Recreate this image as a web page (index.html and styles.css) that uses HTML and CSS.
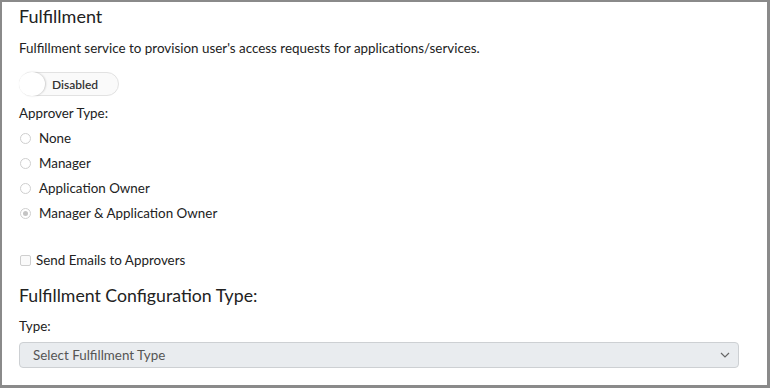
FILE: index.html
```html
<!DOCTYPE html>
<html lang="en">
<head>
    <meta charset="UTF-8">
    <meta name="viewport" content="width=device-width, initial-scale=1.0">
    <title>Fulfillment</title>
    <link rel="stylesheet" href="styles.css">
</head>
<body>
    <div class="panel">
        <h2>Fulfillment</h2>
        <p class="desc">Fulfillment service to provision user's access requests for applications/services.</p>

        <!-- toggle -->
        <div class="toggle">
            <span class="knob"></span>
            <span class="toggle-label">Disabled</span>
        </div>

        <label class="group-label">Approver Type:</label>
        <div class="radios">
            <label class="radio"><span class="dot"></span> None</label>
            <label class="radio"><span class="dot"></span> Manager</label>
            <label class="radio"><span class="dot"></span> Application Owner</label>
            <label class="radio"><span class="dot checked"></span> Manager &amp; Application Owner</label>
        </div>

        <label class="check"><span class="box"></span> Send Emails to Approvers</label>

        <h3>Fulfillment Configuration Type:</h3>
        <label class="type-label">Type:</label>
        <div class="select">
            <span>Select Fulfillment Type</span>
            <svg width="10" height="6" viewBox="0 0 10 6"><path d="M1 1 L5 5 L9 1" fill="none" stroke="#666" stroke-width="1.2"/></svg>
        </div>
    </div>
</body>
</html>
```

FILE: styles.css
```css
html, body {
    margin: 0;
    padding: 0;
}
body {
    font-family: Lato, "Open Sans", sans-serif;
    color: #222;
    background: #fff;
}
.panel {
    width: 770px;
    height: 388px;
    box-sizing: border-box;
    border-top: 2px solid #8a8a8a;
    border-left: 2px solid #8a8a8a;
    border-right: 3px solid #8a8a8a;
    border-bottom: 3px solid #8a8a8a;
    padding: 0 28px 0 17px;
}
h2 {
    font-size: 18px;
    font-weight: 400;
    margin: 3px 0 0 0;
    line-height: 22px;
}
.desc {
    font-size: 13.4px;
    margin: 12px 0 0 0;
    line-height: 18px;
}
.toggle {
    width: 100px;
    height: 24px;
    margin-top: 15px;
    border: 1px solid #e2e2e2;
    border-radius: 13px;
    box-sizing: border-box;
    display: flex;
    align-items: center;
    background: #fafafa;
}
.knob {
    width: 26px;
    height: 24px;
    border-radius: 50%;
    background: #fff;
    box-shadow: 1px 0 2px rgba(0,0,0,0.18);
    margin-left: -1px;
}
.toggle-label {
    font-size: 12px;
    font-weight: 600;
    margin-left: 7px;
    color: #333;
}
.group-label {
    display: block;
    font-size: 13.4px;
    margin-top: 9px;
    line-height: 16px;
}
.radios {
    display: flex;
    flex-direction: column;
    gap: 9px;
    margin-top: 9px;
}
.radio {
    display: flex;
    align-items: center;
    font-size: 13.4px;
    line-height: 16px;
}
.dot {
    width: 9px;
    height: 9px;
    border: 1px solid #cfcfcf;
    border-radius: 50%;
    margin: 0 8px 0 1px;
    background: #fff;
    position: relative;
}
.dot.checked::after {
    content: "";
    position: absolute;
    left: 2px;
    top: 2px;
    width: 5px;
    height: 5px;
    border-radius: 50%;
    background: #c4c4c4;
}
.check {
    display: flex;
    align-items: center;
    font-size: 13.4px;
    line-height: 16px;
    margin-top: 31px;
}
.box {
    width: 9px;
    height: 9px;
    border: 1px solid #cfcfcf;
    border-radius: 2px;
    margin: 0 5px 0 1px;
    background: #fafafa;
}
h3 {
    font-size: 17.7px;
    font-weight: 400;
    margin: 17px 0 0 0;
    line-height: 22px;
}
.type-label {
    display: block;
    font-size: 13.4px;
    margin-top: 11px;
    line-height: 16px;
}
.select {
    margin-top: 8px;
    height: 26px;
    box-sizing: border-box;
    border: 1px solid #cdd0d3;
    border-radius: 4px;
    background: #e9ecef;
    display: flex;
    align-items: center;
    justify-content: space-between;
    padding: 0 8px 0 13px;
    font-size: 13.4px;
    color: #555;
}
```
